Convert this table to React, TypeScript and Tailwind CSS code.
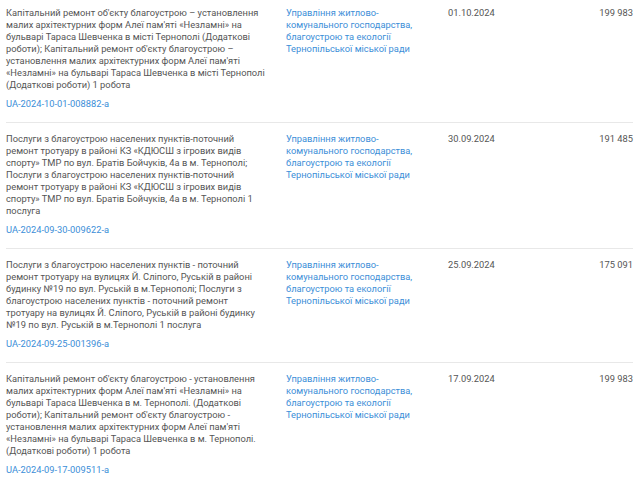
import React from "react";

type Row = {
  title: string;
  id: string;
  org: string;
  date: string;
  amount: string;
};

const ORG = "Управління житлово-комунального господарства, благоустрою та екології Тернопільської міської ради";

const rows: Row[] = [
  {
    title:
      "Капітальний ремонт об'єкту благоустрою – установлення малих архітектурних форм Алеї пам'яті «Незламні» на бульварі Тараса Шевченка в місті Тернополі (Додаткові роботи); Капітальний ремонт об'єкту благоустрою – установлення малих архітектурних форм Алеї пам'яті «Незламні» на бульварі Тараса Шевченка в місті Тернополі (Додаткові роботи) 1 робота",
    id: "UA-2024-10-01-008882-a",
    org: ORG,
    date: "01.10.2024",
    amount: "199 983",
  },
  {
    title:
      "Послуги з благоустрою населених пунктів-поточний ремонт тротуару в районі КЗ «КДЮСШ з ігрових видів спорту» ТМР по вул. Братів Бойчуків, 4а в м. Тернополі; Послуги з благоустрою населених пунктів-поточний ремонт тротуару в районі КЗ «КДЮСШ з ігрових видів спорту» ТМР по вул. Братів Бойчуків, 4а в м. Тернополі 1 послуга",
    id: "UA-2024-09-30-009622-a",
    org: ORG,
    date: "30.09.2024",
    amount: "191 485",
  },
  {
    title:
      "Послуги з благоустрою населених пунктів - поточний ремонт тротуару на вулицях Й. Сліпого, Руській в районі будинку №19 по вул. Руській в м.Тернополі; Послуги з благоустрою населених пунктів - поточний ремонт тротуару на вулицях Й. Сліпого, Руській в районі будинку №19 по вул. Руській в м.Тернополі 1 послуга",
    id: "UA-2024-09-25-001396-a",
    org: ORG,
    date: "25.09.2024",
    amount: "175 091",
  },
  {
    title:
      "Капітальний ремонт об'єкту благоустрою - установлення малих архітектурних форм Алеї пам'яті «Незламні» на бульварі Тараса Шевченка в м. Тернополі. (Додаткові роботи); Капітальний ремонт об'єкту благоустрою - установлення малих архітектурних форм Алеї пам'яті «Незламні» на бульварі Тараса Шевченка в м. Тернополі. (Додаткові роботи) 1 робота",
    id: "UA-2024-09-17-009511-a",
    org: ORG,
    date: "17.09.2024",
    amount: "199 983",
  },
];

export default function App() {
  return (
    <div className="w-full min-h-screen bg-white font-['Roboto',sans-serif] text-[9.3px] leading-[12px] text-[#555]">
      <div className="ml-[6px] w-[627px]">
        {rows.map((row, i) => (
          <div
            key={row.id}
            className={
              "grid grid-cols-[260px_142px_1fr_auto] gap-x-[20px] " +
              (i === 0 ? "pt-[7px] pb-[12px]" : "pt-[10px] pb-[12px] border-t border-[#e8e8e8]")
            }
          >
            <div className="flex flex-col gap-[7px]">
              <p>{row.title}</p>
              <a href="#" className="text-[#3b8ed8]">{row.id}</a>
            </div>
            <a href="#" className="text-[#3b8ed8]">{row.org}</a>
            <div>{row.date}</div>
            <div className="text-right">{row.amount}</div>
          </div>
        ))}
      </div>
    </div>
  );
}
